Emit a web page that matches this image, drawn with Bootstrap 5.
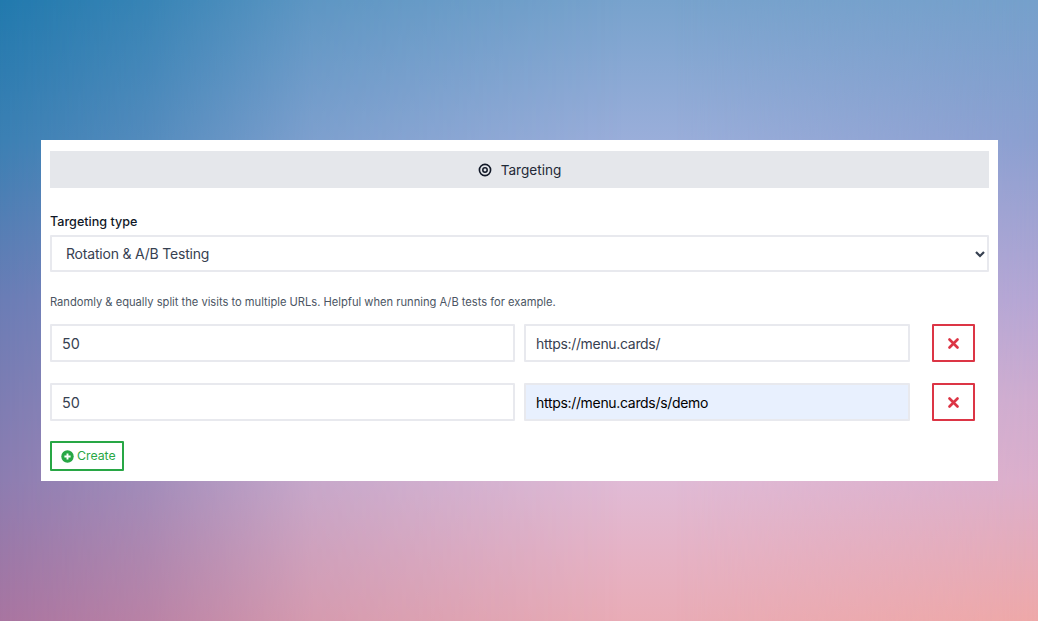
<!DOCTYPE html>
<html lang="en">
<head>
<meta charset="utf-8">
<title>Targeting</title>
<link href="https://cdn.jsdelivr.net/npm/bootstrap@5.3.0/dist/css/bootstrap.min.css" rel="stylesheet">
<style>
html,body{height:100%}
body{margin:0;overflow:hidden;font-family:Inter,"Liberation Sans",sans-serif;color:#374151;position:relative;z-index:0;
background:linear-gradient(180deg,#78a3cd 0,#9aaeda 140px,#bcaed8 300px,#e0bbd6 480px,#e6b2c4 560px,#e9acb6 621px);
padding:140px 40px 0 41px}
body::before,body::after{content:"";position:absolute;inset:0;z-index:-1}
body::before{background:linear-gradient(180deg,#2179ad 0,#3b7fb3 140px,#6a7cb5 300px,#8c7cb0 480px,#a874a0 621px);
-webkit-mask-image:linear-gradient(90deg,#000 0,rgba(0,0,0,.75) 14%,rgba(0,0,0,.3) 30%,transparent 60%);mask-image:linear-gradient(90deg,#000 0,rgba(0,0,0,.75) 14%,rgba(0,0,0,.3) 30%,transparent 60%)}
body::after{background:linear-gradient(180deg,#75a0cb 0,#8b9fd0 140px,#b5a6d4 300px,#cfaccf 400px,#dbaecb 480px,#eea8a8 621px);
-webkit-mask-image:linear-gradient(90deg,transparent 65%,#000 100%);mask-image:linear-gradient(90deg,transparent 65%,#000 100%)}
.panel-box{background:#fff;height:341px;padding:11px 9px}
.head-bar{background:#e5e7eb;height:37px;color:#1f2937;font-size:13.6px;gap:9px;padding-top:1px}
.type-label{font-size:12.6px;font-weight:500;color:#111827;margin:26px 0 5px;line-height:16px}
.field-box{height:37px;border:2px solid #e8e9ee;border-radius:1px;font-size:14px;color:#374151;background-color:#fff;padding:0 14px;box-shadow:none}
.field-select{width:100%;letter-spacing:-.2px;--bs-form-select-bg-img:url("data:image/svg+xml,%3csvg xmlns='http://www.w3.org/2000/svg' viewBox='0 0 10 8'%3e%3cpath fill='none' stroke='%23374151' stroke-width='2.2' d='M1 2l4 4 4-4'/%3e%3c/svg%3e");background-position:right 2px center;background-size:10px 8px}
.help-line{font-size:11.15px;color:#4b5563;margin:22px 0 14px;line-height:16px}
.row-line{display:grid;grid-template-columns:465px 386px 43px;column-gap:9px;height:38px;margin-bottom:21px}
.field-box.num{padding-left:10px;height:38px;width:465px;font-size:14.4px}
.field-box.url{padding-left:10px;height:38px;width:386px;letter-spacing:-.32px}
.field-box.auto{background:#e8f0fe;color:#000;border-color:#e8e9ee}
.del-btn{grid-column:3;width:43px;height:38px;margin-left:13px;border:2px solid #dc3545;border-radius:1px;background:#fff;padding:0}
.new-btn{border:2px solid #28a745;border-radius:1px;background:#fff;color:#28a745;font-size:12.3px;height:30px;width:74px;padding:0 0 0 9px;gap:4px;margin-top:-1px}
.new-btn span{margin-left:-1px}
</style>
</head>
<body>
<div class="panel-box">
  <div class="head-bar d-flex align-items-center justify-content-center">
    <svg width="14" height="14" viewBox="0 0 14 14" aria-hidden="true"><circle cx="7" cy="7" r="5.6" fill="none" stroke="#111827" stroke-width="1.6"/><circle cx="7" cy="7" r="2.2" fill="none" stroke="#111827" stroke-width="1.5"/></svg>
    <span>Targeting</span>
  </div>
  <div class="type-label">Targeting type</div>
  <select class="form-select field-box field-select"><option>Rotation &amp; A/B Testing</option></select>
  <div class="help-line">Randomly &amp; equally split the visits to multiple URLs. Helpful when running A/B tests for example.</div>
  <div class="row-line">
    <input class="form-control field-box num" value="50">
    <input class="form-control field-box url" value="https://menu.cards/">
    <button class="del-btn d-flex align-items-center justify-content-center" type="button" aria-label="Delete"><svg width="11" height="11" viewBox="0 0 11 11"><path d="M1.5 1.5l8 8M9.5 1.5l-8 8" stroke="#dc3545" stroke-width="2.6" stroke-linecap="round"/></svg></button>
  </div>
  <div class="row-line">
    <input class="form-control field-box num" value="50">
    <input class="form-control field-box url auto" value="https://menu.cards/s/demo">
    <button class="del-btn d-flex align-items-center justify-content-center" type="button" aria-label="Delete"><svg width="11" height="11" viewBox="0 0 11 11"><path d="M1.5 1.5l8 8M9.5 1.5l-8 8" stroke="#dc3545" stroke-width="2.6" stroke-linecap="round"/></svg></button>
  </div>
  <button class="new-btn d-flex align-items-center" type="button"><svg width="13" height="13" viewBox="0 0 13 13"><circle cx="6.5" cy="6.5" r="6.2" fill="#28a745"/><path d="M6.5 3.4v6.2M3.4 6.5h6.2" stroke="#fff" stroke-width="1.9"/></svg><span>Create</span></button>
</div>
<script src="https://cdn.jsdelivr.net/npm/bootstrap@5.3.0/dist/js/bootstrap.bundle.min.js"></script>
</body>
</html>
